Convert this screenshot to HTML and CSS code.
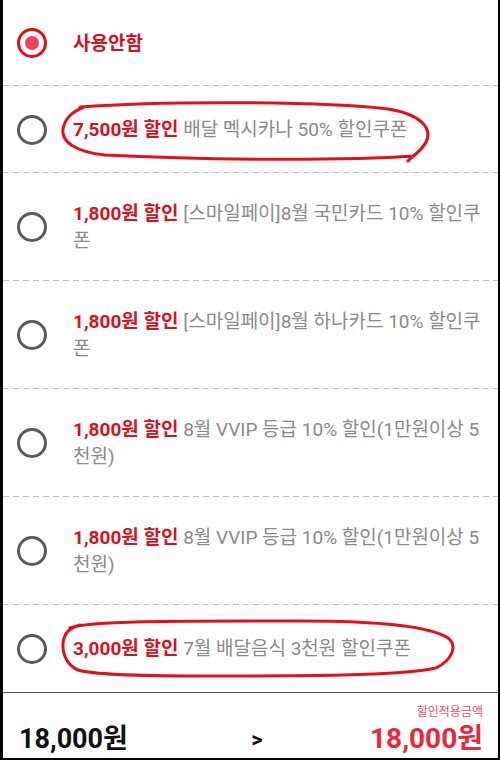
FILE: index.html
```html
<!DOCTYPE html>
<html>
<head>
  <meta charset="UTF-8">
  <title>쿠폰 선택</title>
  <link rel="stylesheet" href="styles.css">
</head>
<body>
<div class="container">
  <div class="coupon first">
    <span class="radio checked"></span>
    <p class="coupon-text"><b>사용안함</b></p>
  </div>
  <div class="coupon">
    <span class="radio"></span>
    <p class="coupon-text"><b>7,500원 할인</b> 배달 멕시카나 50% 할인쿠폰</p>
  </div>
  <div class="coupon">
    <span class="radio"></span>
    <p class="coupon-text"><b>1,800원 할인</b> [스마일페이]8월 국민카드 10% 할인쿠폰</p>
  </div>
  <div class="coupon">
    <span class="radio"></span>
    <p class="coupon-text"><b>1,800원 할인</b> [스마일페이]8월 하나카드 10% 할인쿠폰</p>
  </div>
  <div class="coupon">
    <span class="radio"></span>
    <p class="coupon-text"><b>1,800원 할인</b> 8월 VVIP 등급 10% 할인(1만원이상 5천원)</p>
  </div>
  <div class="coupon">
    <span class="radio"></span>
    <p class="coupon-text"><b>1,800원 할인</b> 8월 VVIP 등급 10% 할인(1만원이상 5천원)</p>
  </div>
  <div class="coupon last">
    <span class="radio"></span>
    <p class="coupon-text"><b>3,000원 할인</b> 7월 배달음식 3천원 할인쿠폰</p>
  </div>
  <div class="total">
    <div class="price">18,000원</div>
    <div class="arrow">&gt;</div>
    <div class="final">
      <p class="final-label">할인적용금액</p>
      <p class="final-price">18,000원</p>
    </div>
  </div>
</div>
<svg class="marks" width="500" height="760" viewBox="0 0 500 760">
  <path d="M80,107 C160,101 320,101 388,109 C420,114 433,128 426,142 C421,152 412,156 408,161 M414,156 C340,161 200,160 105,155 C76,152 61,142 63,129 C65,118 72,112 84,107"/>
  <path d="M70,628 C90,620 200,621 300,621 C380,621 430,626 448,638 C458,646 452,660 436,668 C400,676 300,676 200,676 C140,676 95,675 78,670 C64,664 61,648 64,638 C66,631 72,627 80,625"/>
</svg>
</body>
</html>
```

FILE: styles.css
```css
html, body {
  margin: 0;
  padding: 0;
  background: #fff;
}
body {
  position: relative;
  width: 500px;
  height: 760px;
  font-family: Roboto, "Noto Sans CJK KR", sans-serif;
}
.container {
  box-sizing: border-box;
  width: 500px;
  height: 760px;
  display: flex;
  flex-direction: column;
  border-left: 3px solid #000;
  border-right: 2px solid #000;
  border-bottom: 2px solid #000;
}
.coupon {
  box-sizing: border-box;
  display: flex;
  align-items: center;
  min-height: 108px;
  padding: 27px 9px 27px 14px;
  background: repeating-linear-gradient(to right, #bdbdbd 0 6px, transparent 6px 10px) left bottom / 100% 1px no-repeat;
}
.coupon.first {
  min-height: 86px;
}
.coupon.last {
  min-height: 87px;
  background: none;
}
.coupon:nth-child(2) {
  min-height: 87px;
}
.radio {
  flex: none;
  box-sizing: border-box;
  width: 30px;
  height: 30px;
  border: 3px solid #5a5a5a;
  border-radius: 50%;
  margin-right: 26px;
  display: flex;
  align-items: center;
  justify-content: center;
}
.radio.checked {
  border-color: #d8111f;
}
.radio.checked::before {
  content: "";
  width: 14px;
  height: 14px;
  border-radius: 50%;
  background: #f0425a;
}
.coupon-text {
  margin: 0;
  font-size: 19px;
  line-height: 27px;
  color: #8a8a8a;
  word-break: break-all;
}
.coupon-text b {
  color: #d8111f;
  font-weight: bold;
}
.total {
  flex: 1;
  display: flex;
  align-items: flex-end;
  justify-content: space-between;
  border-top: 1px solid #555;
  padding: 0 15px 2px 16px;
}
.price {
  font-size: 27px;
  font-weight: bold;
  line-height: 34px;
  color: #111;
}
.arrow {
  font-size: 22px;
  font-weight: bold;
  line-height: 32px;
  color: #111;
  margin-left: 16px;
}
.final {
  text-align: right;
}
.final p {
  margin: 0;
}
.final-label {
  font-size: 12px;
  line-height: 16px;
  color: #e8506a;
  margin-bottom: 2px !important;
}
.final-price {
  font-size: 28px;
  font-weight: bold;
  line-height: 34px;
  color: #e8283c;
}
.marks {
  position: absolute;
  top: 0;
  left: 0;
  pointer-events: none;
}
.marks path {
  fill: none;
  stroke: #e3101c;
  stroke-width: 3;
  stroke-linecap: round;
  stroke-linejoin: round;
}
```
